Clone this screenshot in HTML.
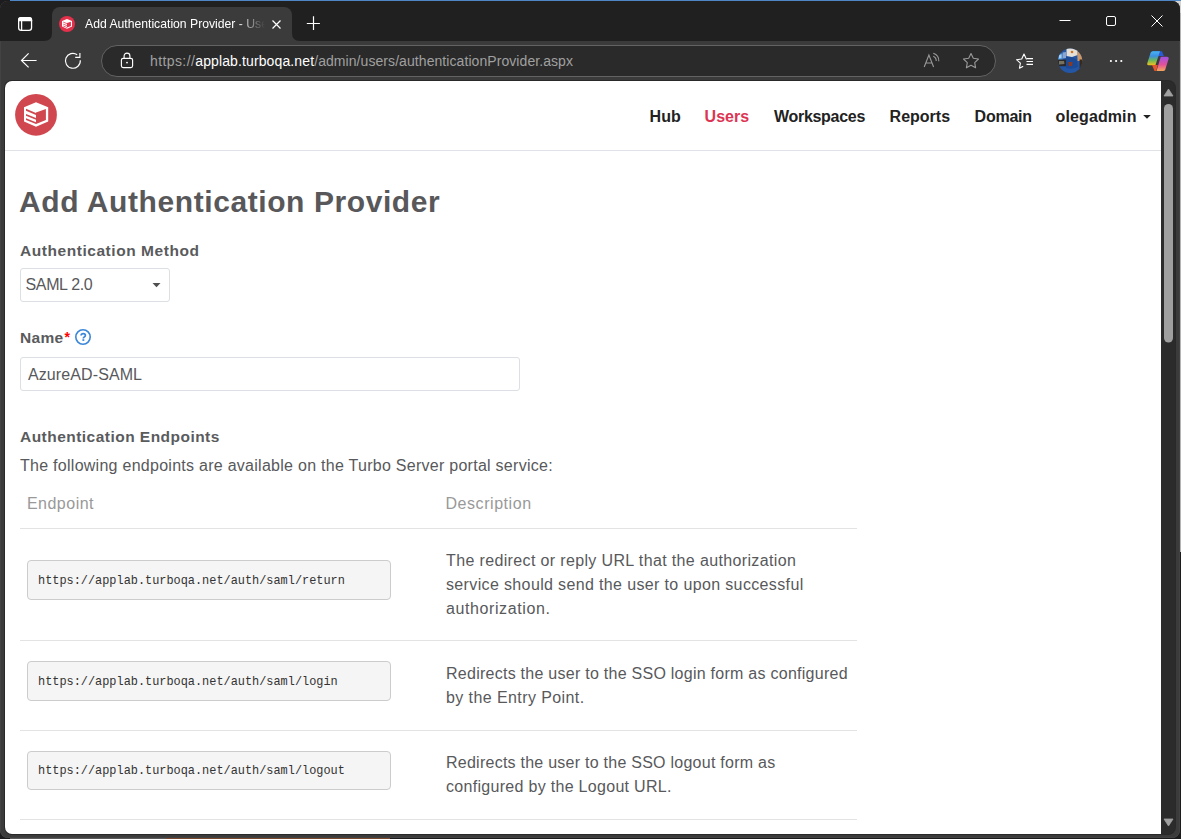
<!DOCTYPE html>
<html><head><meta charset="utf-8">
<style>
*{margin:0;padding:0;box-sizing:border-box}
html,body{width:1181px;height:839px;overflow:hidden;background:#1c1c1f;font-family:"Liberation Sans",sans-serif}
.a{position:absolute}
.t{position:absolute;white-space:nowrap;line-height:1}
#blue{left:10px;top:0;width:1171px;height:1px;background:#4f86c6}
#win{left:0;top:1px;width:1180px;height:837px;background:#3b3b3b;border-radius:8px;overflow:hidden;box-shadow:inset 0 0 0 0.6px #4a4a4a}
#strip{left:0;top:0;width:1180px;height:40px;background:#202020}
#tab{left:52px;top:6px;width:240px;height:40px;background:#3b3b3b;border-radius:8px 8px 0 0}
#content{left:5px;top:81px;width:1156px;height:753px;background:#fff;border-radius:7px 0 0 7px;overflow:hidden}
#frame{left:4px;top:80px;width:1172px;height:755px;background:#292929;border-radius:8px}
#track{left:1161px;top:81px;width:14px;height:753px;background:#2b2b2b;border-radius:0 7px 7px 0}
#addr{left:101px;top:45px;width:895px;height:32px;border:1px solid #636363;background:#2a2a2a;border-radius:16px}
.nav{font-weight:bold;font-size:16px;color:#222;top:109.2px}
.lbl{font-weight:bold;font-size:15.5px;color:#5a5b5d}
.body{font-size:16px;color:#58595b}
.code{left:27px;width:364px;height:40px;background:#f5f5f5;border:1px solid #cccccc;border-radius:4px}
.mono{font-family:"Liberation Mono",monospace;font-size:11.9px;color:#333;left:38px}
.hr{left:20px;width:837px;height:1px;background:#e3e3e3}
.desc{left:446px;font-size:16px;color:#58595b;letter-spacing:0.3px}
</style></head>
<body>
<div class="a" style="left:1180px;top:2px;width:1px;height:550px;background:#b4b4b4"></div>
<div class="a" style="left:10px;top:838px;width:156px;height:1px;background:#5a5a5a"></div>
<div class="a" style="left:166px;top:838px;width:224px;height:1px;background:#7a4a30"></div>
<div class="a" id="blue"></div>
<div class="a" style="left:1168px;top:1px;width:13px;height:12px;background:#d4d4d4"></div>
<div class="a" id="win">
  <div class="a" id="strip"></div>
  <div class="a" id="tab"></div>
</div>
<!-- sidebar icon -->
<svg class="a" style="left:0;top:0" width="1181" height="80" viewBox="0 0 1181 80">
  <!-- tab flares -->
  <path d="M44 41 Q52 41 52 33 L52 41 Z" fill="#3b3b3b"/>
  <path d="M300 41 Q292 41 292 33 L292 41 Z" fill="#3b3b3b"/>
  <rect x="18.65" y="17.65" width="12.9" height="12.7" rx="2.6" fill="none" stroke="#fff" stroke-width="1.3"/>
  <path d="M18 21.3 V20.2 Q18 17 21.2 17 H29 Q32.2 17 32.2 20.2 V21.3 Z" fill="#fff"/>
  <line x1="21.6" y1="21" x2="21.6" y2="31" stroke="#fff" stroke-width="1.3"/>
  <!-- favicon -->
  <circle cx="67" cy="24" r="8" fill="#e3304b"/>
  <path d="M67 18.9 L72 21.1 L72 26.5 L67 28.7 L62 26.5 L62 21.1 Z" fill="#fff"/>
  <path d="M67 23.1 L70.9 21.8 L70.9 26.1 L67 27.5 Z" fill="#e3304b"/>
  <path d="M63.2 22.1 L67 23.6 M63.2 24.1 L67 25.6 M63.2 26 L67 27.5" stroke="#e3304b" stroke-width="0.75"/>
  <!-- tab close -->
  <path d="M272.5 20.5 L280.5 28.5 M280.5 20.5 L272.5 28.5" stroke="#fff" stroke-width="1.2"/>
  <!-- plus -->
  <path d="M313.5 16.3 V30.1 M306.8 23.5 H319.9" stroke="#fff" stroke-width="1.2"/>
  <!-- window controls -->
  <path d="M1059.5 20.5 H1070.5" stroke="#fff" stroke-width="1"/>
  <rect x="1106.5" y="16.5" width="9" height="9" rx="1.5" fill="none" stroke="#fff" stroke-width="1"/>
  <path d="M1151.5 15.5 L1162.5 26.5 M1162.5 15.5 L1151.5 26.5" stroke="#fff" stroke-width="1"/>
</svg>
<div class="a" id="addr"></div>
<svg class="a" style="left:0;top:40px" width="1181" height="40" viewBox="0 40 1181 40">
  <!-- back -->
  <path d="M36.6 60.5 H21.5 M28.6 53.4 L21.5 60.5 L28.6 67.4" fill="none" stroke="#fff" stroke-width="1.2"/>
  <!-- refresh -->
  <path d="M77.2 54.75 A7.45 7.45 0 1 0 80.3 60.2" fill="none" stroke="#fff" stroke-width="1.15"/>
  <path d="M75.2 57.4 H79.9 V52.9" fill="none" stroke="#fff" stroke-width="1.15"/>
  <!-- lock -->
  <rect x="121.4" y="58.3" width="11.2" height="9.3" rx="1.8" fill="none" stroke="#fff" stroke-width="1.15"/>
  <path d="M124.1 58.3 V56 A2.9 2.9 0 0 1 129.9 56 V58.3" fill="none" stroke="#fff" stroke-width="1.15"/>
  <circle cx="127" cy="62.6" r="0.9" fill="#fff"/>
  <!-- read aloud -->
  <path d="M924.2 67 L928.9 55 L933.6 67 M925.8 63 H932" fill="none" stroke="#9a9a9a" stroke-width="1.1"/>
  <path d="M933.3 53.2 A8 8 0 0 1 938.8 61.2 M933.3 56.2 A5 5 0 0 1 936.2 61" fill="none" stroke="#9a9a9a" stroke-width="1.1"/>
  <!-- star -->
  <path d="M971 53.5 L973.3 58.3 L978.5 59 L974.7 62.6 L975.6 67.8 L971 65.3 L966.4 67.8 L967.3 62.6 L963.5 59 L968.7 58.3 Z" fill="none" stroke="#9a9a9a" stroke-width="1.1" stroke-linejoin="round"/>
  <!-- favorites -->
  <path d="M1026.3 59 L1024 54 L1021.7 59 L1016.5 59.7 L1020.4 63.2 L1019.4 68.3 L1022.8 66.5" fill="none" stroke="#fff" stroke-width="1.1" stroke-linejoin="round" stroke-linecap="round"/>
  <path d="M1026.5 58.6 H1033 M1026.5 61.5 H1033 M1026.5 64.4 H1033" stroke="#fff" stroke-width="1.1"/>
  <!-- avatar -->
  <defs><clipPath id="avc"><circle cx="1070.1" cy="60.8" r="12.2"/></clipPath></defs>
  <g clip-path="url(#avc)">
    <rect x="1057" y="48" width="26" height="26" fill="#2456a6"/>
    <path d="M1066 57 Q1072 56 1077 60 L1078 67 Q1072 70 1066 68 Z" fill="#1d4a94"/>
    <path d="M1057 53.5 L1062.5 53.5 L1062.5 60.3 L1057 60.3 Z" fill="#4d97dc"/>
    <path d="M1059 55 L1061.5 54.5 L1061.5 58 L1059 58.5 Z" fill="#a8cdf0"/>
    <path d="M1062.6 52.5 L1066 52 L1066 58 L1062.6 58.5 Z" fill="#8aa6d0"/>
    <path d="M1057 59.6 L1066 59.6 L1066 66.2 L1057 66.2 Z" fill="#2a2a2c"/>
    <path d="M1059 61 L1064 61 L1064.5 64 L1059 64.5 Z" fill="#77715f"/>
    <path d="M1066.5 48 L1077.5 48 L1077.8 55 L1072 57 L1066.5 56 Z" fill="#e4e0d8"/>
    <circle cx="1072" cy="52" r="1.3" fill="#d8741e"/>
    <path d="M1077.2 50 L1084 52 L1084 61 L1077.5 61 Z" fill="#c9976a"/>
    <path d="M1079.6 59.6 L1084 59.6 L1084 68 L1079.6 68 Z" fill="#3a2818"/>
    <path d="M1068.3 62 L1072.6 62 L1072 66 L1068.8 66 Z" fill="#8a3a22"/>
  </g>
  <!-- dots -->
  <circle cx="1110.9" cy="61" r="1.1" fill="#fff"/>
  <circle cx="1116.1" cy="61" r="1.1" fill="#fff"/>
  <circle cx="1121.3" cy="61" r="1.1" fill="#fff"/>
  <!-- copilot -->
  <defs>
    <linearGradient id="cg1" x1="0" y1="0" x2="0" y2="1">
      <stop offset="0" stop-color="#48b6f2"/><stop offset="0.35" stop-color="#3c8fe0"/><stop offset="0.65" stop-color="#6ab85a"/><stop offset="1" stop-color="#f2c21c"/>
    </linearGradient>
    <linearGradient id="cg2" x1="0" y1="0" x2="0" y2="1">
      <stop offset="0" stop-color="#a052e6"/><stop offset="0.55" stop-color="#e2509a"/><stop offset="1" stop-color="#f6a85a"/>
    </linearGradient>
  </defs>
  <path d="M1151.5 51.2 L1162 51.2 L1163.8 56 L1159 56 L1158 56.5 Z" fill="#2a5ad6"/>
  <path d="M1150.6 52.8 Q1151 51.2 1153 51.2 L1160 51.2 L1155.4 65.2 L1148.5 65.2 Q1146.8 65.2 1147.2 63.5 Z" fill="url(#cg1)"/>
  <path d="M1152 65 L1157.8 65 L1156.2 71 L1154.5 71 Z" fill="#e8542e"/>
  <path d="M1160.8 56.7 L1167 56.7 Q1169 56.7 1168.7 58.5 L1165.3 69.5 Q1164.8 71 1163 71 L1156.5 71 Z" fill="url(#cg2)"/>
</svg>
<div class="t" style="left:85px;top:17.5px;font-size:12.2px;color:#fff;width:180px;overflow:hidden;letter-spacing:0px;-webkit-mask-image:linear-gradient(90deg,#000 84%,transparent 100%)">Add Authentication Provider - Users</div>
<div class="t" style="left:150px;top:54.2px;font-size:14px;color:#a0a0a0"><span style="letter-spacing:0.4px">https://</span><span style="color:#fff;letter-spacing:0.12px">applab.turboqa.net</span><span style="letter-spacing:0.07px">/admin/users/authenticationProvider.aspx</span></div>

<div class="a" id="frame"></div>
<div class="a" id="content"></div>
<div class="a" id="track"></div>
<svg class="a" style="left:1161px;top:80px" width="14" height="754" viewBox="1161 80 14 754">
  <path d="M1168.5 89 L1173 96 L1164 96 Z" fill="#a0a0a0" stroke="#a0a0a0" stroke-width="0.8" stroke-linejoin="round"/>
  <rect x="1164" y="104" width="9" height="238.5" rx="4.5" fill="#9f9f9f"/>
  <path d="M1168.5 826 L1173 819 L1164 819 Z" fill="#a0a0a0" stroke="#a0a0a0" stroke-width="0.8" stroke-linejoin="round"/>
</svg>

<!-- header -->
<svg class="a" style="left:0;top:80px" width="80" height="70" viewBox="0 80 80 70">
  <circle cx="36" cy="114.8" r="20.9" fill="#d0474f"/>
  <path d="M36 102.2 L48.2 107.2 L48.2 121.4 L36 126.7 L24 121.4 L24 107.2 Z" fill="#fff"/>
  <path d="M36 112.5 L45.9 109 L45.9 120 L36 123.9 Z" fill="#d0474f"/>
  <path d="M26 108.8 L36 112.9 L36 114.9 L26 110.8 Z M26 113.9 L36 117.9 L36 119.7 L26 115.7 Z M26 118.2 L36 122.2 L36 124 L26 120 Z" fill="#d0474f"/>
</svg>
<div class="a" style="left:5px;top:149.5px;width:1156px;height:1px;background:#dfe2e6"></div>
<div class="t nav" style="left:649.6px">Hub</div>
<div class="t nav" style="left:704.6px;color:#dc3553">Users</div>
<div class="t nav" style="left:774px;letter-spacing:-0.3px">Workspaces</div>
<div class="t nav" style="left:889.6px">Reports</div>
<div class="t nav" style="left:974.6px;letter-spacing:-0.25px">Domain</div>
<div class="t nav" style="left:1055.6px;letter-spacing:0.1px">olegadmin</div>
<svg class="a" style="left:1140px;top:112px" width="14" height="8"><path d="M3.2 3 L10.8 3 L7 6.8 Z" fill="#222"/></svg>

<!-- title -->
<div class="t" style="left:19px;top:187px;font-size:30px;font-weight:bold;color:#58585a;letter-spacing:0.58px">Add Authentication Provider</div>
<div class="t lbl" style="left:20px;top:242.5px;letter-spacing:0.55px">Authentication Method</div>
<div class="a" style="left:20px;top:268px;width:150px;height:34px;border:1px solid #dcdfe3;border-radius:3px"></div>
<div class="t body" style="left:25.5px;top:276.8px;font-size:16px;letter-spacing:-0.35px">SAML 2.0</div>
<svg class="a" style="left:150.5px;top:280px" width="12" height="10"><path d="M1.5 3 L9.5 3 L5.5 7.2 Z" fill="#505050"/></svg>

<div class="t lbl" style="left:20px;top:329.5px;letter-spacing:0.3px">Name</div>
<div class="t" style="left:64.5px;top:329.5px;font-size:14px;font-weight:bold;color:#f00">*</div>
<svg class="a" style="left:73px;top:327px" width="20" height="20" viewBox="73 327 20 20">
  <circle cx="83" cy="337" r="7.2" fill="none" stroke="#3b86d9" stroke-width="1.6"/>
  <path d="M81.1 335.6 Q81.1 333.6 83.3 333.6 Q85.4 333.6 85.4 335.3 Q85.4 336.4 84.3 336.9 Q83.3 337.4 83.3 338.4" fill="none" stroke="#3b86d9" stroke-width="1.7"/>
  <rect x="82.4" y="339.2" width="1.9" height="1.7" fill="#3b86d9"/>
</svg>
<div class="a" style="left:20px;top:357px;width:500px;height:34px;border:1px solid #dcdfe3;border-radius:3px"></div>
<div class="t body" style="left:28px;top:366.5px;letter-spacing:0.1px">AzureAD-SAML</div>

<div class="t lbl" style="left:20px;top:428.5px;letter-spacing:0.47px">Authentication Endpoints</div>
<div class="t body" style="left:20px;top:458px;letter-spacing:0.27px">The following endpoints are available on the Turbo Server portal service:</div>
<div class="t body" style="left:26.9px;top:496.2px;color:#999;letter-spacing:0.5px">Endpoint</div>
<div class="t body" style="left:445.5px;top:496.2px;color:#999;letter-spacing:0.55px">Description</div>
<div class="a hr" style="top:528px"></div>

<div class="a code" style="top:560px"></div>
<div class="t mono" style="top:575.5px">https://applab.turboqa.net/auth/saml/return</div>
<div class="t desc" style="top:552.5px;letter-spacing:0.36px">The redirect or reply URL that the authorization</div>
<div class="t desc" style="top:576.5px;letter-spacing:0.36px">service should send the user to upon successful</div>
<div class="t desc" style="top:600.5px;letter-spacing:0.6px">authorization.</div>
<div class="a hr" style="top:640px"></div>

<div class="a code" style="top:661px"></div>
<div class="t mono" style="top:676.5px">https://applab.turboqa.net/auth/saml/login</div>
<div class="t desc" style="top:665.5px;letter-spacing:0.26px">Redirects the user to the SSO login form as configured</div>
<div class="t desc" style="top:689.5px;letter-spacing:0.41px">by the Entry Point.</div>
<div class="a hr" style="top:730px"></div>

<div class="a code" style="top:751px;height:39px"></div>
<div class="t mono" style="top:765.5px">https://applab.turboqa.net/auth/saml/logout</div>
<div class="t desc" style="top:754.5px;letter-spacing:0.25px">Redirects the user to the SSO logout form as</div>
<div class="t desc" style="top:778.5px">configured by the Logout URL.</div>
<div class="a hr" style="top:819px"></div>
</body></html>
